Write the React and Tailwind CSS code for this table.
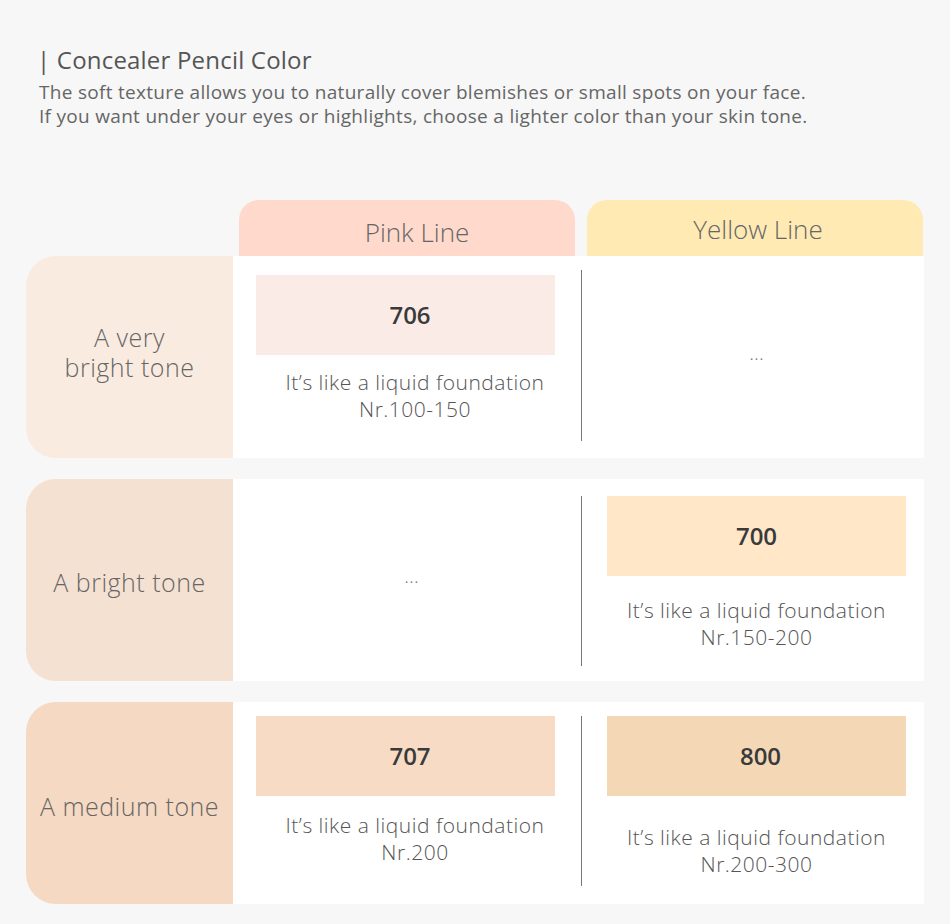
const FONT = "font-['Open_Sans','Noto_Sans',sans-serif]"

const ROWS = [
  {
    label: ['A very', 'bright tone'],
    labelBg: 'bg-[#faebe1]',
    labelPad: 'pb-[10px]',
    left: { code: '706', bg: 'bg-[#fbebe6]', nr: 'Nr.100-150', top: 'pt-[19px]', gap: 'mt-[14px]' },
    right: null,
    divider: 'mt-[14px] mb-[17px]',
  },
  {
    label: ['A bright tone'],
    labelBg: 'bg-[#f5e1d2]',
    labelPad: 'pt-[3px]',
    left: null,
    right: { code: '700', bg: 'bg-[#ffe7c7]', nr: 'Nr.150-200', top: 'pt-[17px]', gap: 'mt-[21px]' },
    divider: 'mt-[17px] mb-[15px]',
  },
  {
    label: ['A medium tone'],
    labelBg: 'bg-[#f5d9c2]',
    labelPad: 'pt-[5px]',
    left: { code: '707', bg: 'bg-[#f7dbc4]', nr: 'Nr.200', top: 'pt-[14px]', gap: 'mt-[16px]' },
    right: { code: '800', bg: 'bg-[#f4d8b6]', nr: 'Nr.200-300', top: 'pt-[14px]', gap: 'mt-[28px]', shift: 'pl-[8px]' },
    divider: 'mt-[14px] mb-[18px]',
  },
]

function Cell({ item, side }) {
  if (!item) {
    return (
      <div className={`flex-1 flex items-center justify-center text-[20px] font-light text-[#777] pb-[8px] ${side === 'left' ? 'pl-[12px]' : ''}`}>...</div>
    )
  }
  const numPad = side === 'left' ? 'pl-[9px]' : item.shift || ''
  return (
    <div className={`flex-1 flex flex-col items-center ${item.top}`}>
      <div className={`w-[299px] h-[80px] ${item.bg} ${numPad} flex items-center justify-center text-[24px] font-semibold text-[#3a3a3a]`}>
        {item.code}
      </div>
      <p className={`${item.gap} ${side === 'left' ? 'pl-[19px]' : ''} text-center text-[21px] leading-[27px] tracking-[0.5px] font-light text-[#555]`}>
        It’s like a liquid foundation<br />{item.nr}
      </p>
    </div>
  )
}

export default function App() {
  return (
    <div className={`${FONT} bg-[#f7f7f7] w-[950px] h-[924px] pt-[44px]`}>
      {/* Heading */}
      <div className="pl-[37px]">
        <h2 className="text-[24px] leading-[32px] tracking-[0.2px] text-[#555]">| Concealer Pencil Color</h2>
        <p className="mt-[4px] ml-[2px] text-[19px] leading-[24px] tracking-[0.3px] text-[#666]">
          The soft texture allows you to naturally cover blemishes or small spots on your face.<br />
          If you want under your eyes or highlights, choose a lighter color than your skin tone.
        </p>
      </div>

      {/* Table */}
      <div className="ml-[26px] w-[898px] mt-[72px]">
        <div className="flex h-[56px]">
          <div className="w-[213px]" />
          <div className="w-[336px] rounded-t-[20px] bg-[#ffd9cb] flex items-center justify-center text-[26px] font-light text-[#666] pt-[8px] pl-[20px]">
            Pink Line
          </div>
          <div className="w-[336px] ml-[12px] rounded-t-[20px] bg-[#ffeab3] flex items-center justify-center text-[26px] font-light text-[#666] pt-[2px] pl-[6px]">
            Yellow Line
          </div>
        </div>

        <div className="flex flex-col gap-[21px]">
          {ROWS.map((row, i) => (
            <div key={i} className="flex h-[202px]">
              <div className={`w-[207px] rounded-l-[30px] ${row.labelBg} ${row.labelPad} flex items-center justify-center text-center text-[25px] leading-[30px] tracking-[0.5px] font-light text-[#666]`}>
                <p>
                  {row.label[0]}
                  {row.label[1] && <><br />{row.label[1]}</>}
                </p>
              </div>
              <div className="flex-1 bg-white flex">
                <div className="w-[348px] pr-[3px] flex">
                  <Cell item={row.left} side="left" />
                </div>
                <div className={`w-px bg-[#777] ${row.divider}`} />
                <div className="flex-1 flex pl-[7px]">
                  <Cell item={row.right} side="right" />
                </div>
              </div>
            </div>
          ))}
        </div>
      </div>
    </div>
  )
}
